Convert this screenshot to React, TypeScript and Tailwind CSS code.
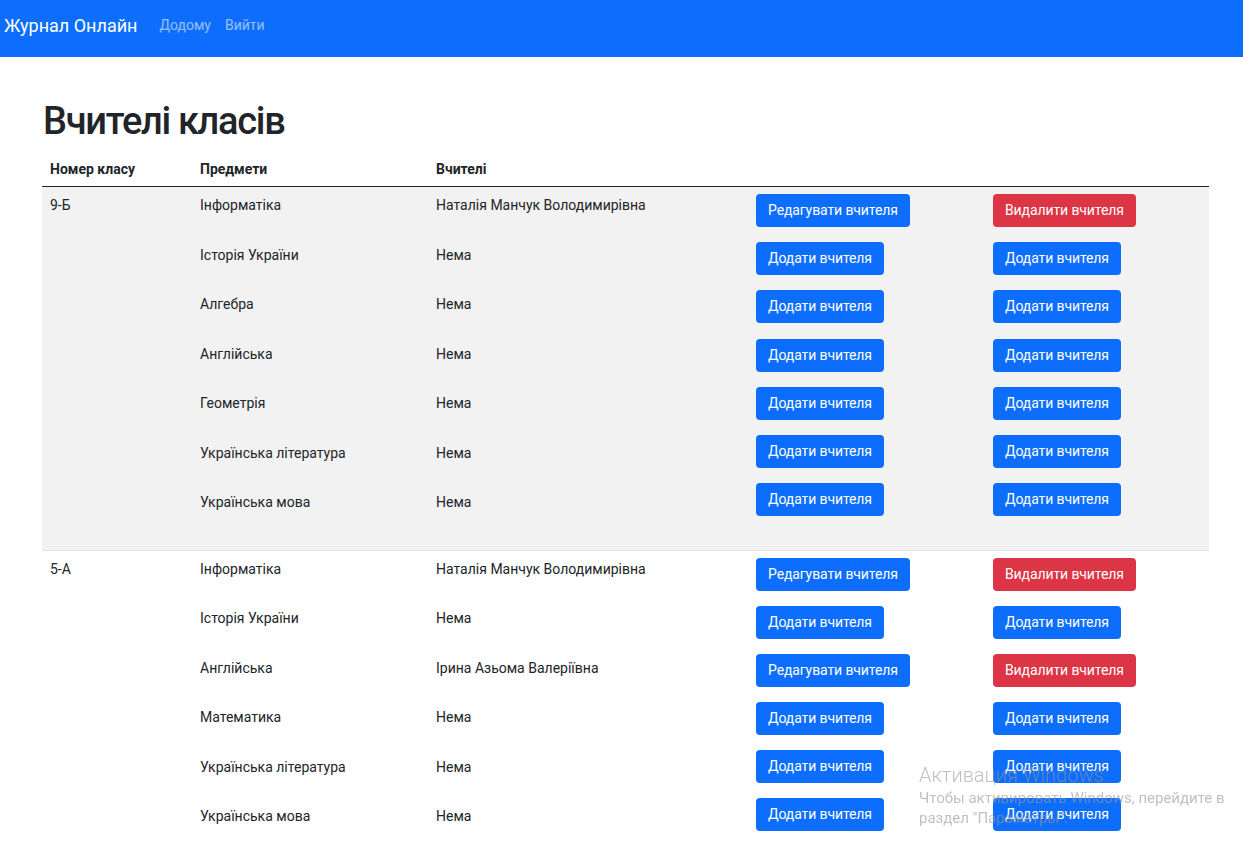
import React from 'react';

type Item = { subject: string; teacher: string | null };
type Group = { cls: string; items: Item[] };

const groups: Group[] = [
  {
    cls: '9-Б',
    items: [
      { subject: 'Інформатіка', teacher: 'Наталія Манчук Володимирівна' },
      { subject: 'Історія України', teacher: null },
      { subject: 'Алгебра', teacher: null },
      { subject: 'Англійська', teacher: null },
      { subject: 'Геометрія', teacher: null },
      { subject: 'Українська література', teacher: null },
      { subject: 'Українська мова', teacher: null },
    ],
  },
  {
    cls: '5-А',
    items: [
      { subject: 'Інформатіка', teacher: 'Наталія Манчук Володимирівна' },
      { subject: 'Історія України', teacher: null },
      { subject: 'Англійська', teacher: 'Ірина Азьома Валеріївна' },
      { subject: 'Математика', teacher: null },
      { subject: 'Українська література', teacher: null },
      { subject: 'Українська мова', teacher: null },
    ],
  },
];

const cols = 'grid grid-cols-[150px_236px_320px_237px_224px]';

function Btn({ color, children }: { color: 'blue' | 'red'; children: React.ReactNode }) {
  return (
    <button
      className={
        'h-[33px] px-3 rounded text-white text-[14px] leading-[21px] tracking-[-0.1px] ' +
        (color === 'red' ? 'bg-[#dc3545]' : 'bg-[#0d6efd]')
      }
    >
      {children}
    </button>
  );
}

function GroupRow({ group, striped }: { group: Group; striped: boolean }) {
  return (
    <div className={`${cols} border-b border-[#dee2e6] ${striped ? 'bg-[#f2f2f2]' : 'bg-white'}`}>
      <div className="px-2 py-2 leading-[21px]">{group.cls}</div>
      <div className="px-2 py-2 flex flex-col">
        {group.items.map((it, i) => (
          <div key={i} className="h-[49.5px] leading-[21px]">{it.subject}</div>
        ))}
      </div>
      <div className="px-2 py-2 flex flex-col">
        {group.items.map((it, i) => (
          <div key={i} className="h-[49.5px] leading-[21px]">{it.teacher ?? 'Нема'}</div>
        ))}
      </div>
      <div className="px-2 py-[7px] flex flex-col">
        {group.items.map((it, i) => (
          <div key={i} className="h-[48.2px]">
            <Btn color="blue">{it.teacher ? 'Редагувати вчителя' : 'Додати вчителя'}</Btn>
          </div>
        ))}
      </div>
      <div className="px-2 py-[7px] flex flex-col">
        {group.items.map((it, i) => (
          <div key={i} className="h-[48.2px]">
            <Btn color={it.teacher ? 'red' : 'blue'}>{it.teacher ? 'Видалити вчителя' : 'Додати вчителя'}</Btn>
          </div>
        ))}
      </div>
    </div>
  );
}

export default function App() {
  return (
    <div className="min-h-screen bg-white text-[#212529] font-['Roboto',sans-serif] text-[14px]">
      {/* Navbar */}
      <nav className="h-[57px] bg-[#0d6efd] flex items-center pl-1 pb-[6px]">
        <span className="text-white text-[18px] leading-[30px]">Журнал Онлайн</span>
        <div className="flex gap-[14px] ml-[22px] text-[14px] text-white/55">
          <a>Додому</a>
          <a>Вийти</a>
        </div>
      </nav>

      <main className="ml-[42px] w-[1167px]">
        <h1 className="mt-[40px] mb-[4px] pl-[1px] text-[38px] leading-[48px] font-medium tracking-[-1.3px]">
          Вчителі класів
        </h1>

        {/* Table header */}
        <div className={`${cols} font-bold border-b border-[#212529]`}>
          <div className="px-2 pt-[10px] pb-[6px] leading-[21px]">Номер класу</div>
          <div className="px-2 pt-[10px] pb-[6px] leading-[21px]">Предмети</div>
          <div className="px-2 pt-[10px] pb-[6px] leading-[21px]">Вчителі</div>
          <div />
          <div />
        </div>

        {groups.map((g, i) => (
          <GroupRow key={i} group={g} striped={i % 2 === 0} />
        ))}
      </main>

      {/* Windows activation watermark */}
      <div className="fixed z-50 left-[919px] top-[762px] text-[rgba(150,150,150,0.6)] pointer-events-none">
        <div className="text-[20px] leading-[26px] font-light">Активация Windows</div>
        <div className="text-[15px] leading-[20px]">Чтобы активировать Windows, перейдите в</div>
        <div className="text-[15px] leading-[20px]">раздел "Параметры".</div>
      </div>
    </div>
  );
}
